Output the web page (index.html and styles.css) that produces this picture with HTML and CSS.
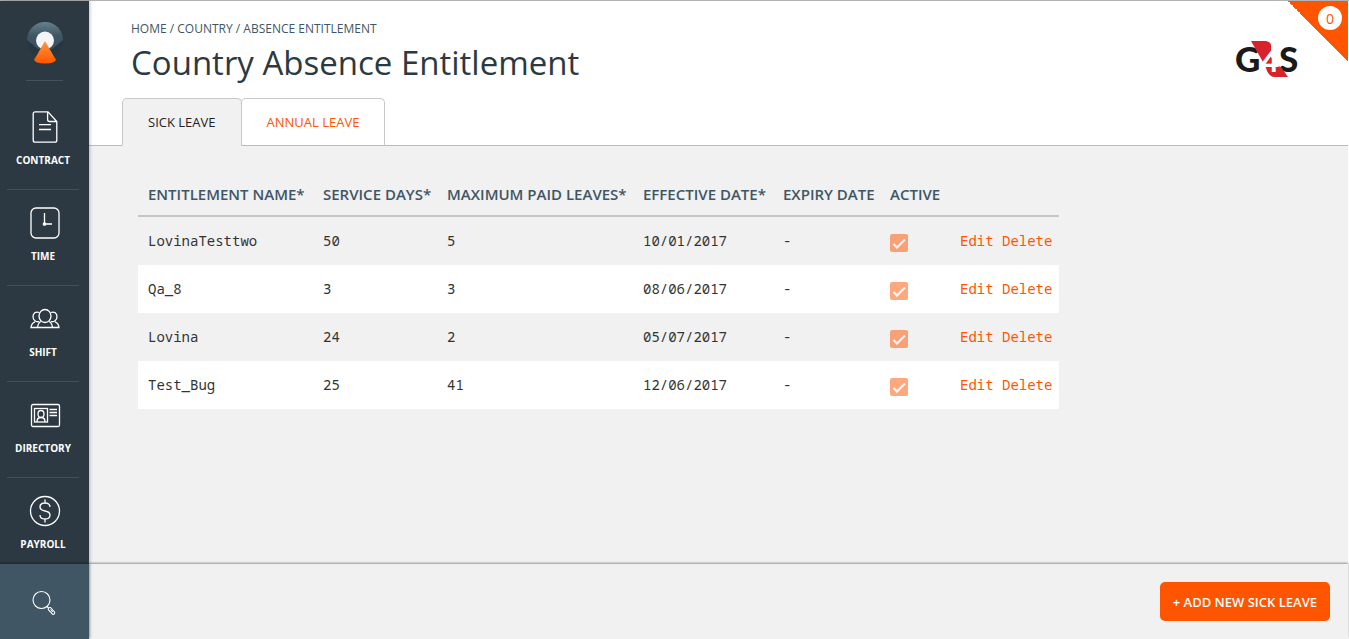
FILE: index.html
```html
<!DOCTYPE html>
<html lang="en">
<head>
<meta charset="utf-8">
<title>Country Absence Entitlement</title>
<link rel="stylesheet" href="styles.css">
</head>
<body>
<div class="app">
  <aside class="sidebar">
    <a class="brand" href="#" aria-label="Home">
      <svg width="36" height="42" viewBox="0 0 36 42">
        <defs>
          <linearGradient id="dome" x1="0" y1="0" x2="0" y2="1"><stop offset="0" stop-color="#66818f"/><stop offset=".5" stop-color="#405665"/><stop offset="1" stop-color="#3a5060"/></linearGradient>
          <linearGradient id="cone" x1="0" y1="0" x2="0" y2="1"><stop offset="0" stop-color="#ff9a3c"/><stop offset="1" stop-color="#ff5400"/></linearGradient>
        </defs>
        <circle cx="18" cy="18" r="18" fill="#283640"/>
        <path d="M0 18a18 18 0 0 1 36 0L25 27H11z" fill="url(#dome)"/>
        <circle cx="18" cy="18.500" r="9" fill="#f3f5f8"/>
        <path d="M18 19L29 38Q27 41.500 18 41.500T7 38z" fill="url(#cone)"/>
      </svg>
    </a>
    <nav class="nav">
      <a class="nav-item" href="#">
        <svg class="nav-icon" viewBox="0 0 32 32"><path d="M16.500 .8H6.200a2 2 0 0 0-2 2v26.400a2 2 0 0 0 2 2h19.600a2 2 0 0 0 2-2V10.500L19 .8h-2.500M18.600 1v7.500q0 2 2 2h7.200M10 13.700h12M10 18.500h12"/></svg>
        <span>CONTRACT</span>
      </a>
      <a class="nav-item" href="#">
        <svg class="nav-icon" viewBox="0 0 32 32"><rect x="2" y="1" width="28" height="30" rx="5"/><path d="M15.500 6v11H23"/><circle cx="15.500" cy="17" r="1.200" fill="#fff"/></svg>
        <span>TIME</span>
      </a>
      <a class="nav-item" href="#">
        <svg class="nav-icon" viewBox="0 0 32 32"><ellipse cx="16" cy="13" rx="6" ry="6.500"/><path d="M10.200 9.500C6.500 8 4 10.500 4 13.800s3 5.700 6.200 4.700M21.800 9.500C25.500 8 28 10.500 28 13.800s-3 5.700-6.200 4.700M12 18.500q-3 1.500-3.500 6h15q-.5-4.500-3.500-6M6 18.800q-3.500 1.200-4 5.700h6.500M26 18.800q3.500 1.200 4 5.700h-6.500"/></svg>
        <span>SHIFT</span>
      </a>
      <a class="nav-item" href="#">
        <svg class="nav-icon" viewBox="0 0 32 32"><rect x="2.500" y="5.500" width="28" height="22" rx="1.500"/><rect x="5.500" y="9.500" width="13" height="13.500"/><ellipse cx="12" cy="15" rx="3" ry="3.500"/><path d="M8 23q0-4 3-4.500h2q3 .5 3 4.500M20.500 10.500H28M20.500 13.500H28M20.500 16.500H28"/></svg>
        <span>DIRECTORY</span>
      </a>
      <a class="nav-item" href="#">
        <svg class="nav-icon" viewBox="0 0 32 32"><circle cx="16" cy="16" r="14.500"/><path d="M16 4.500V8M16 24v3.500M21 12c0-2.500-2-4-5-4s-5 1.500-5 4 2 3.500 5 4 5 1.700 5 4-2 4-5 4-5-1.500-5-4"/></svg>
        <span>PAYROLL</span>
      </a>
    </nav>
    <button class="search" aria-label="Search">
      <svg class="search-icon" viewBox="0 0 24 26"><circle cx="9.500" cy="10" r="8.500"/><path d="M15 16.500l1.500 1.500M16.300 19.800q-.3-2.500 2.200-2.300l4 4.500q.6 2.300-1.700 2.500zM18.500 19.500l2.200 2.500"/></svg>
    </button>
  </aside>
  <div class="page">
    <header class="header">
      <div class="heading">
        <p class="crumbs"><a href="#">HOME</a> / <a href="#">COUNTRY</a> / ABSENCE ENTITLEMENT</p>
        <h1>Country Absence Entitlement</h1>
      </div>
      <div class="tabs" role="tablist">
        <button class="tab tab-active" role="tab" aria-selected="true">SICK LEAVE</button>
        <button class="tab" role="tab" aria-selected="false">ANNUAL LEAVE</button>
      </div>
      <svg class="company" viewBox="-4 -8 70 54" role="img" aria-label="G4S">
        <text class="company-text" x="-1" y="31">G</text>
        <text class="company-text" x="43" y="31">S</text>
        <path fill="#d9232b" d="M15 0h15q6 1 5 7v9l6 9 4 1 7 10H38q-6-1-8-9l-3-6z"/>
        <text class="company-four" x="25" y="31">4</text>
      </svg>
      <div class="corner"><span class="count">0</span></div>
    </header>
    <main class="content">
      <table class="grid">
        <colgroup><col class="c-name"><col class="c-days"><col class="c-max"><col class="c-date"><col class="c-expiry"><col class="c-active"><col class="c-actions"></colgroup>
        <thead><tr><th>ENTITLEMENT NAME*</th><th>SERVICE DAYS*</th><th>MAXIMUM PAID LEAVES*</th><th>EFFECTIVE DATE*</th><th>EXPIRY DATE</th><th>ACTIVE</th><td></td></tr></thead>
        <tbody>
          <tr><td>LovinaTesttwo</td><td>50</td><td>5</td><td>10/01/2017</td><td>-</td><td><input type="checkbox" checked disabled aria-label="Active"></td><td><a href="#">Edit</a> <a href="#">Delete</a></td></tr>
          <tr><td>Qa_8</td><td>3</td><td>3</td><td>08/06/2017</td><td>-</td><td><input type="checkbox" checked disabled aria-label="Active"></td><td><a href="#">Edit</a> <a href="#">Delete</a></td></tr>
          <tr><td>Lovina</td><td>24</td><td>2</td><td>05/07/2017</td><td>-</td><td><input type="checkbox" checked disabled aria-label="Active"></td><td><a href="#">Edit</a> <a href="#">Delete</a></td></tr>
          <tr><td>Test_Bug</td><td>25</td><td>41</td><td>12/06/2017</td><td>-</td><td><input type="checkbox" checked disabled aria-label="Active"></td><td><a href="#">Edit</a> <a href="#">Delete</a></td></tr>
        </tbody>
      </table>
    </main>
    <footer class="footer"><button class="add">+ ADD NEW SICK LEAVE</button></footer>
  </div>
</div>
</body>
</html>
```
FILE: styles.css
```css
* { box-sizing: border-box; }
body { margin: 0; font-family: "Open Sans", "Noto Sans", sans-serif; color: #333; background: #f1f1f1; }
a { color: inherit; text-decoration: none; }
button { font-family: inherit; border: 0; cursor: pointer; }
.app { display: flex; height: 100vh; border-top: 1px solid #b3b3b3; }

.sidebar { flex: 0 0 89px; display: flex; flex-direction: column; background: #2c3942; box-shadow: 1px 0 3px rgba(0, 0, 0, .25); z-index: 1; }
.brand { display: flex; justify-content: center; margin: 0 26px; padding: 21px 0 16px; border-bottom: 1px solid #47525a; }
.brand svg { flex: none; }
.nav { flex: 1; min-height: 0; overflow: hidden; padding: 13px 10px 0 7px; }
.nav-item { display: flex; flex-direction: column; align-items: center; height: 96px; padding-top: 17px; border-bottom: 1px solid #43505a; color: #fff; font-size: 10px; line-height: 16px; font-weight: 700; }
.nav-icon { width: 32px; height: 32px; margin: 0 0 9px 3px; fill: none; stroke: #fff; stroke-width: 1.3; }
.search { flex: 0 0 75px; padding: 6px 2px 0 0; background: #405665; box-shadow: 0 -1px 2px rgba(0, 0, 0, .4); }
.search-icon { width: 24px; height: 26px; fill: none; stroke: #fff; stroke-width: 1.1; }

.page { flex: 1; min-width: 0; display: flex; flex-direction: column; border-right: 1px solid #fff; }
.header { position: relative; background: #fff; border-bottom: 1px solid #bbb; padding: 18px 0 0 33px; }
.heading { padding-left: 9px; }
.crumbs { margin: 0; color: #405665; font-size: 12px; line-height: 20px; }
h1 { margin: 0; color: #2c3942; font-weight: 400; font-size: 33px; line-height: 48px; }
.tabs { display: flex; margin: 11px 0 -1px; }
.tab { height: 48px; padding: 0 25px; background: #fff; border: 1px solid #c8c8c8; border-radius: 5px 5px 0 0; color: #ff5400; font-size: 13px; }
.tab + .tab { margin-left: -1px; border-bottom-color: #bbb; }
.tab-active { background: #f1f1f1; border-bottom-color: #f1f1f1; color: #222; }
.company { position: absolute; top: 32px; right: 46px; width: 70px; height: 54px; }
.company-text { font: 900 35px Lato, sans-serif; fill: #1a1a18; }
.company-four { font: 900 31px Lato, sans-serif; fill: #fff; }
.corner { position: absolute; top: 0; right: 0; width: 60px; height: 60px; background: linear-gradient(45deg, transparent 50%, #ff5400 50%); }
.count { position: absolute; top: 5px; right: 6px; width: 24px; height: 24px; border-radius: 50%; background: #fff; color: #ff5400; font-size: 14px; line-height: 25px; text-align: center; }

.content { flex: 1; padding: 28px 49px; }
.grid { width: 921px; table-layout: fixed; border-collapse: separate; border-spacing: 0; white-space: nowrap; }
.c-name { width: 175px; }
.c-days { width: 124px; }
.c-max { width: 196px; }
.c-date { width: 140px; }
.c-expiry { width: 107px; }
.c-active { width: 70px; }
.c-actions { width: 109px; }
.grid th, .grid td { padding: 0 0 2px 10px; text-align: left; }
.grid th { height: 43px; color: #405665; font-size: 15px; font-weight: 600; }
.grid thead th, .grid thead td { border-bottom: 2px solid #c6c6c6; }
.grid td { font: 14px "Noto Sans Mono", "DejaVu Sans Mono", monospace; }
.grid tbody td { height: 48px; }
.grid tbody tr:nth-child(even) { background: #fff; }
.grid td a { color: #ff5400; }
.grid input { appearance: none; display: block; width: 18px; height: 18px; margin: 6px 0 0; border-radius: 2px; opacity: .5; background: #ff5400 url("data:image/svg+xml,%3Csvg xmlns='http://www.w3.org/2000/svg' viewBox='0 0 18 18'%3E%3Cpath d='M3.500 10l3.500 3.500L15 5.500' fill='none' stroke='white' stroke-width='2'/%3E%3C/svg%3E"); }

.footer { flex: 0 0 75px; display: flex; align-items: center; justify-content: flex-end; padding-right: 18px; background: #f1f1f1; box-shadow: 0 -1px 2px rgba(0, 0, 0, .4); }
.add { height: 39px; padding: 0 13px; border-radius: 5px; background: #ff5400; color: #fff; font-size: 13px; font-weight: 600; }
```
